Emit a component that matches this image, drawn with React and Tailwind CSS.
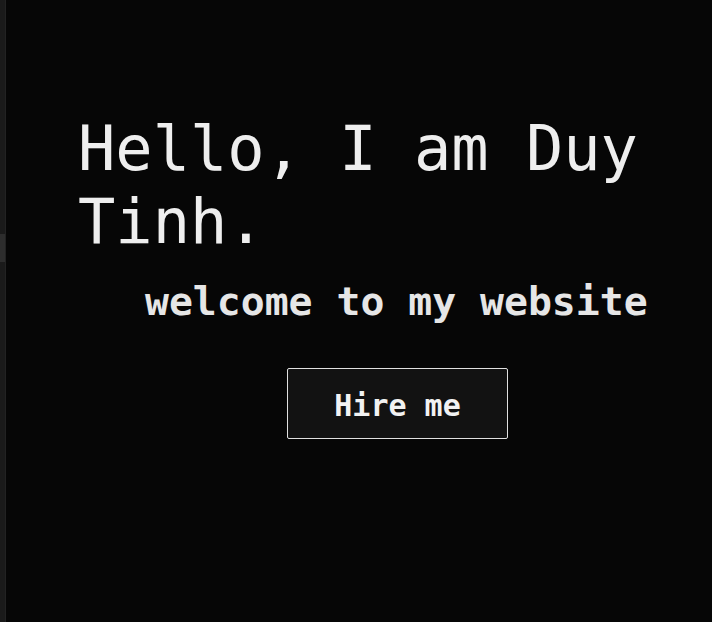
export default function App() {
  const mono = { fontFamily: '"DejaVu Sans Mono", monospace' };
  return (
    <div className="flex h-[622px] w-[712px] overflow-hidden bg-[#060606]" style={mono}>
      <div className="flex w-[6px] shrink-0 flex-col border-r border-[#222222] bg-[#1a1a1a]">
        <div className="h-[234px]" />
        <div className="h-[28px] bg-[#2d2d2d]" />
      </div>
      <div className="flex flex-1 flex-col pt-[112px]">
        <h1 className="ml-[72px] w-[580px] text-[62px] font-normal leading-[73px] text-[#eeeeee]">
          Hello, I am Duy Tinh.
        </h1>
        <p className="ml-[139px] mt-[20px] whitespace-nowrap text-[39.75px] font-bold leading-[46px] text-[#e6e6e6]">
          welcome to my website
        </p>
        <div className="ml-[281px] mt-[44px]">
          <button className="flex h-[71px] w-[221px] items-center justify-center rounded-[2px] border border-[#e0e0e0] bg-[#121212] pt-[3px] text-[30px] font-bold leading-[35px] text-[#f2f2f2]">
            Hire me
          </button>
        </div>
      </div>
    </div>
  );
}
